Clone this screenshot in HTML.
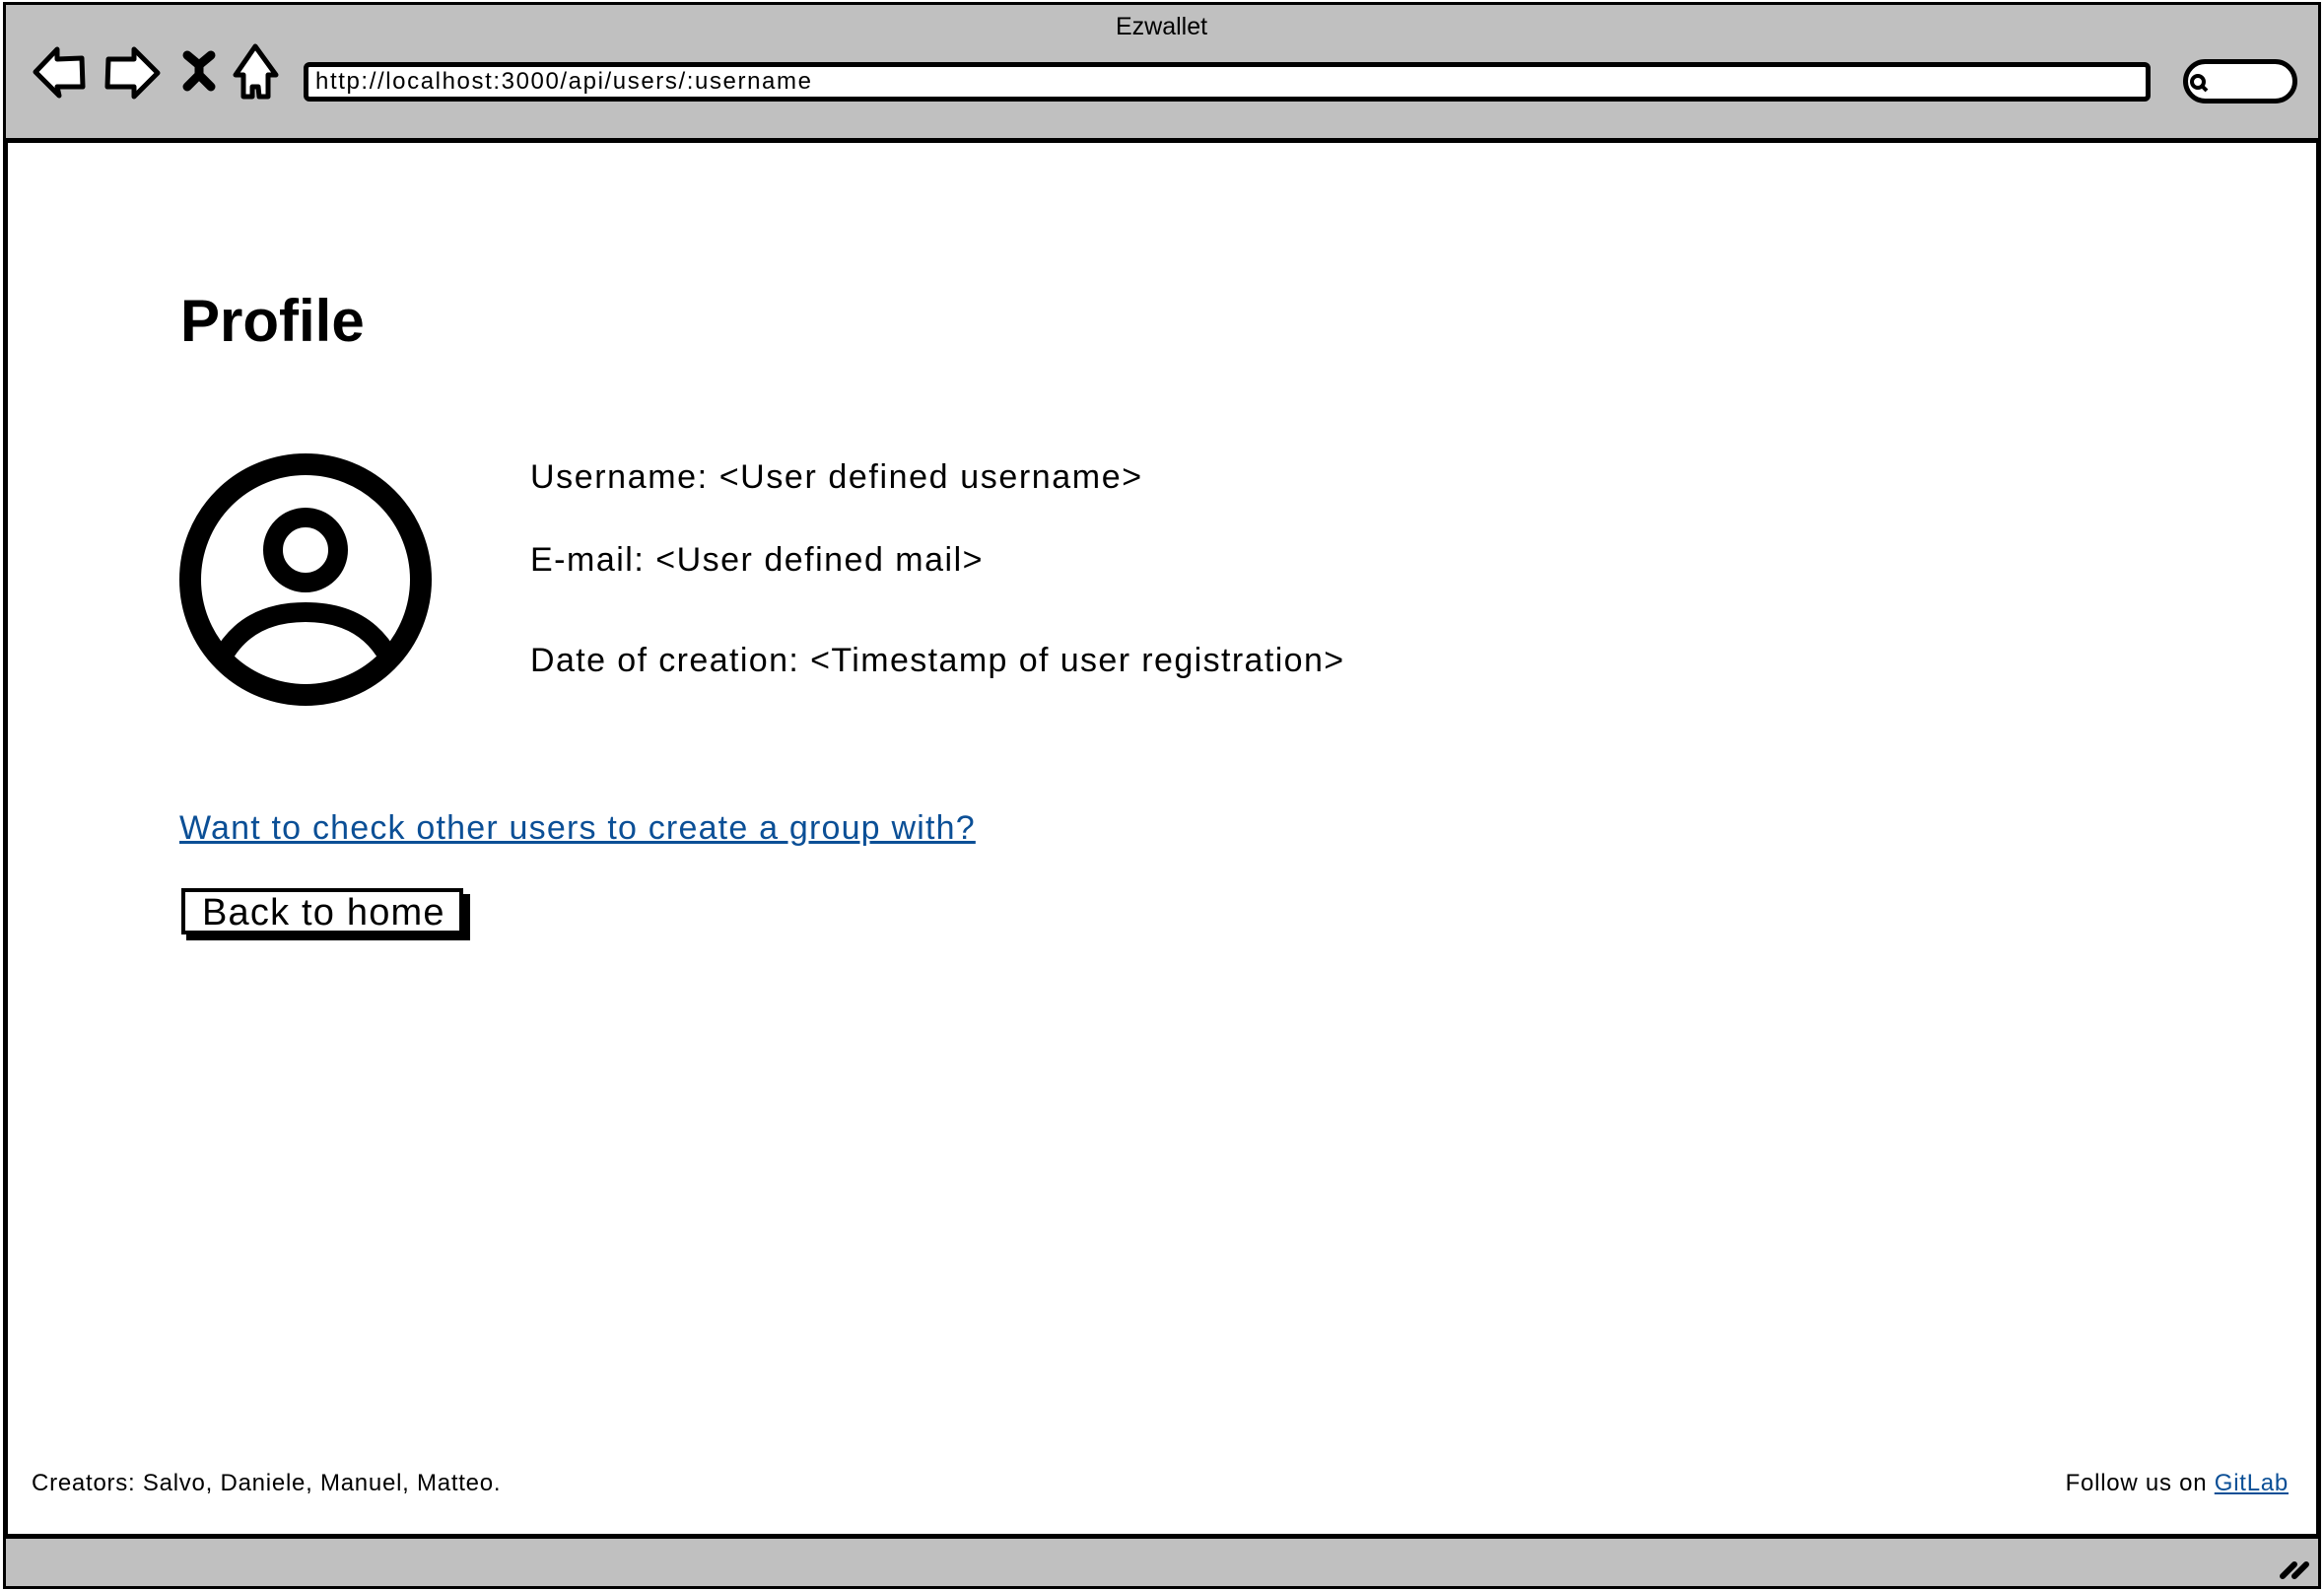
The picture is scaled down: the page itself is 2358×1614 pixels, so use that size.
<!DOCTYPE html>
<html><head><meta charset="utf-8"><style>
*{margin:0;padding:0;box-sizing:border-box}
body{width:2358px;height:1614px;background:#fff;position:relative;overflow:hidden;font-family:"Liberation Sans",sans-serif;color:#000}
.a{position:absolute;white-space:nowrap}
</style></head><body>
<div class="a" style="left:3px;top:2px;width:2352px;height:1610px;border:5px solid #000;background:#fff"></div>
<div class="a" style="left:6px;top:5px;width:2346px;height:140px;background:#c0c0c0;border-bottom:5px solid #000"></div>
<div class="a" style="left:6px;top:1556px;width:2346px;height:53px;background:#c0c0c0;border-top:5px solid #000"></div>
<div class="a" style="left:1132px;top:13px;font-size:25px;">Ezwallet</div>
<svg class="a" style="left:0;top:0" width="400" height="140">
<g fill="#fff" stroke="#000" stroke-width="5" stroke-linejoin="round">
<path d="M36 73 L58 50 L58 60 L83 59 L84 88 L58 88 L60 97 Z"/>
<path d="M160 74 L136 50 L136 60 L110 60 L109 88 L136 88 L136 98 Z"/>
<path d="M259 47 L280 76 L272 76 L272 98 L263 98 L262 88 L256 88 L256 98 L247 98 L247 76 L239 76 Z"/>
</g>
<path d="M190 56 L202 66 L214 56 M190 88 L202 76 L214 88 M202 66 L202 76" stroke="#000" stroke-width="9" stroke-linecap="round" fill="none"/>
</svg>
<div class="a" style="left:308px;top:63px;width:1874px;height:40px;background:#fff;border:5px solid #000;border-radius:6px"></div>
<div class="a" style="left:320px;top:67px;font-size:24px;line-height:32px;letter-spacing:1.6px;">http://localhost:3000/api/users/:username</div>
<div class="a" style="left:2215px;top:60px;width:116px;height:45px;background:#fff;border:5px solid #000;border-radius:24px"></div>
<svg class="a" style="left:2218px;top:70px" width="30" height="30"><circle cx="12" cy="13" r="6" fill="none" stroke="#000" stroke-width="4"/><path d="M16 17 L21 22" stroke="#000" stroke-width="4"/></svg>
<div class="a" style="left:183px;top:291px;font-size:60px;font-weight:bold;">Profile</div>
<svg class="a" style="left:180px;top:458px" width="260" height="260">
<circle cx="130" cy="130" r="117" fill="none" stroke="#000" stroke-width="22"/>
<circle cx="130" cy="100" r="33" fill="none" stroke="#000" stroke-width="20"/>
<path d="M45 210 Q70 163 130 163 Q190 163 215 210" fill="none" stroke="#000" stroke-width="20"/>
</svg>
<div class="a" style="left:538px;top:465px;font-size:34px;letter-spacing:1.6px;">Username: &lt;User defined username&gt;</div>
<div class="a" style="left:538px;top:549px;font-size:34px;letter-spacing:1.5px;">E-mail: &lt;User defined mail&gt;</div>
<div class="a" style="left:538px;top:651px;font-size:34px;letter-spacing:1.4px;">Date of creation: &lt;Timestamp of user registration&gt;</div>
<div class="a" style="left:182px;top:821px;font-size:34px;letter-spacing:1.2px;color:#0b4f96;text-decoration:underline;">Want to check other users to create a group with?</div>
<div class="a" style="left:189px;top:907px;width:288px;height:47px;background:#000"></div>
<div class="a" style="left:184px;top:901px;width:286px;height:47px;background:#fff;border:4px solid #000"></div>
<div class="a" style="left:205px;top:903px;font-size:38px;line-height:47px;letter-spacing:1.2px;">Back to home</div>
<div class="a" style="left:32px;top:1491px;font-size:24px;letter-spacing:0.75px;">Creators: Salvo, Daniele, Manuel, Matteo.</div>
<div class="a" style="right:36px;top:1491px;font-size:24px;letter-spacing:0.75px;">Follow us on <span style="color:#0b4f96;text-decoration:underline">GitLab</span></div>
<svg class="a" style="left:2310px;top:1575px" width="40" height="30"><path d="M6 24 L18 12 M18 24 L30 12" stroke="#000" stroke-width="6" stroke-linecap="round"/></svg>
</body></html>
